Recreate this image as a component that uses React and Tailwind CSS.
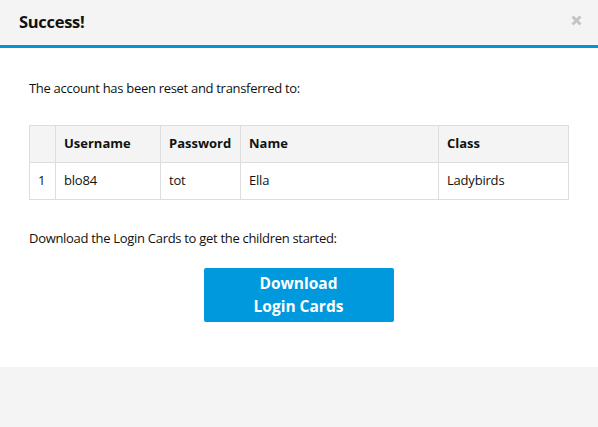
export default function App() {
  const font = { fontFamily: "'Open Sans', 'Noto Sans', sans-serif" };
  return (
    <div className="w-[598px] h-[427px] bg-[#f4f4f4] flex flex-col text-[#111]" style={font}>
      <div className="h-[45px] bg-[#f4f4f4] flex items-center justify-between pl-[19px] pr-[16px] border-b-[3px] border-[#0096d6] box-content">
        <div className="text-[16.5px] font-bold tracking-[-0.3px]">Success!</div>
        <svg width="11" height="11" viewBox="0 0 11 11" className="mt-[-4px]">
          <path d="M1.5 1.5 L9.5 9.5 M9.5 1.5 L1.5 9.5" stroke="#c4c4c4" strokeWidth="3" strokeLinecap="butt" />
        </svg>
      </div>
      <div className="bg-white h-[319px] flex flex-col px-[29px]">
        <p className="mt-[31px] text-[13px] leading-[18px] tracking-[-0.3px]">The account has been reset and transferred to:</p>
        <table className="mt-[28px] w-[540px] border-collapse text-[13px] table-fixed">
          <colgroup>
            <col className="w-[26px]" />
            <col className="w-[105px]" />
            <col className="w-[80px]" />
            <col className="w-[198px]" />
            <col />
          </colgroup>
          <thead>
            <tr className="h-[37px] bg-[#f4f4f4]">
              <th className="border border-[#dddddd]"></th>
              <th className="border border-[#dddddd] text-left font-bold px-[8px]">Username</th>
              <th className="border border-[#dddddd] text-left font-bold px-[8px]">Password</th>
              <th className="border border-[#dddddd] text-left font-bold px-[8px]">Name</th>
              <th className="border border-[#dddddd] text-left font-bold px-[8px]">Class</th>
            </tr>
          </thead>
          <tbody>
            <tr className="h-[37px] tracking-[-0.2px]">
              <td className="border border-[#dddddd] px-[8px]">1</td>
              <td className="border border-[#dddddd] px-[8px]">blo84</td>
              <td className="border border-[#dddddd] px-[8px]">tot</td>
              <td className="border border-[#dddddd] px-[8px]">Ella</td>
              <td className="border border-[#dddddd] px-[8px]">Ladybirds</td>
            </tr>
          </tbody>
        </table>
        <p className="mt-[29px] text-[13px] leading-[18px] tracking-[-0.3px]">Download the Login Cards to get the children started:</p>
        <div className="flex justify-center mt-[21px]">
          <button className="w-[190px] h-[54px] bg-[#0099dd] rounded-[2px] text-white font-bold text-[15.5px] leading-[23px] ml-[-1px]">
            Download<br />Login Cards
          </button>
        </div>
      </div>
    </div>
  );
}
